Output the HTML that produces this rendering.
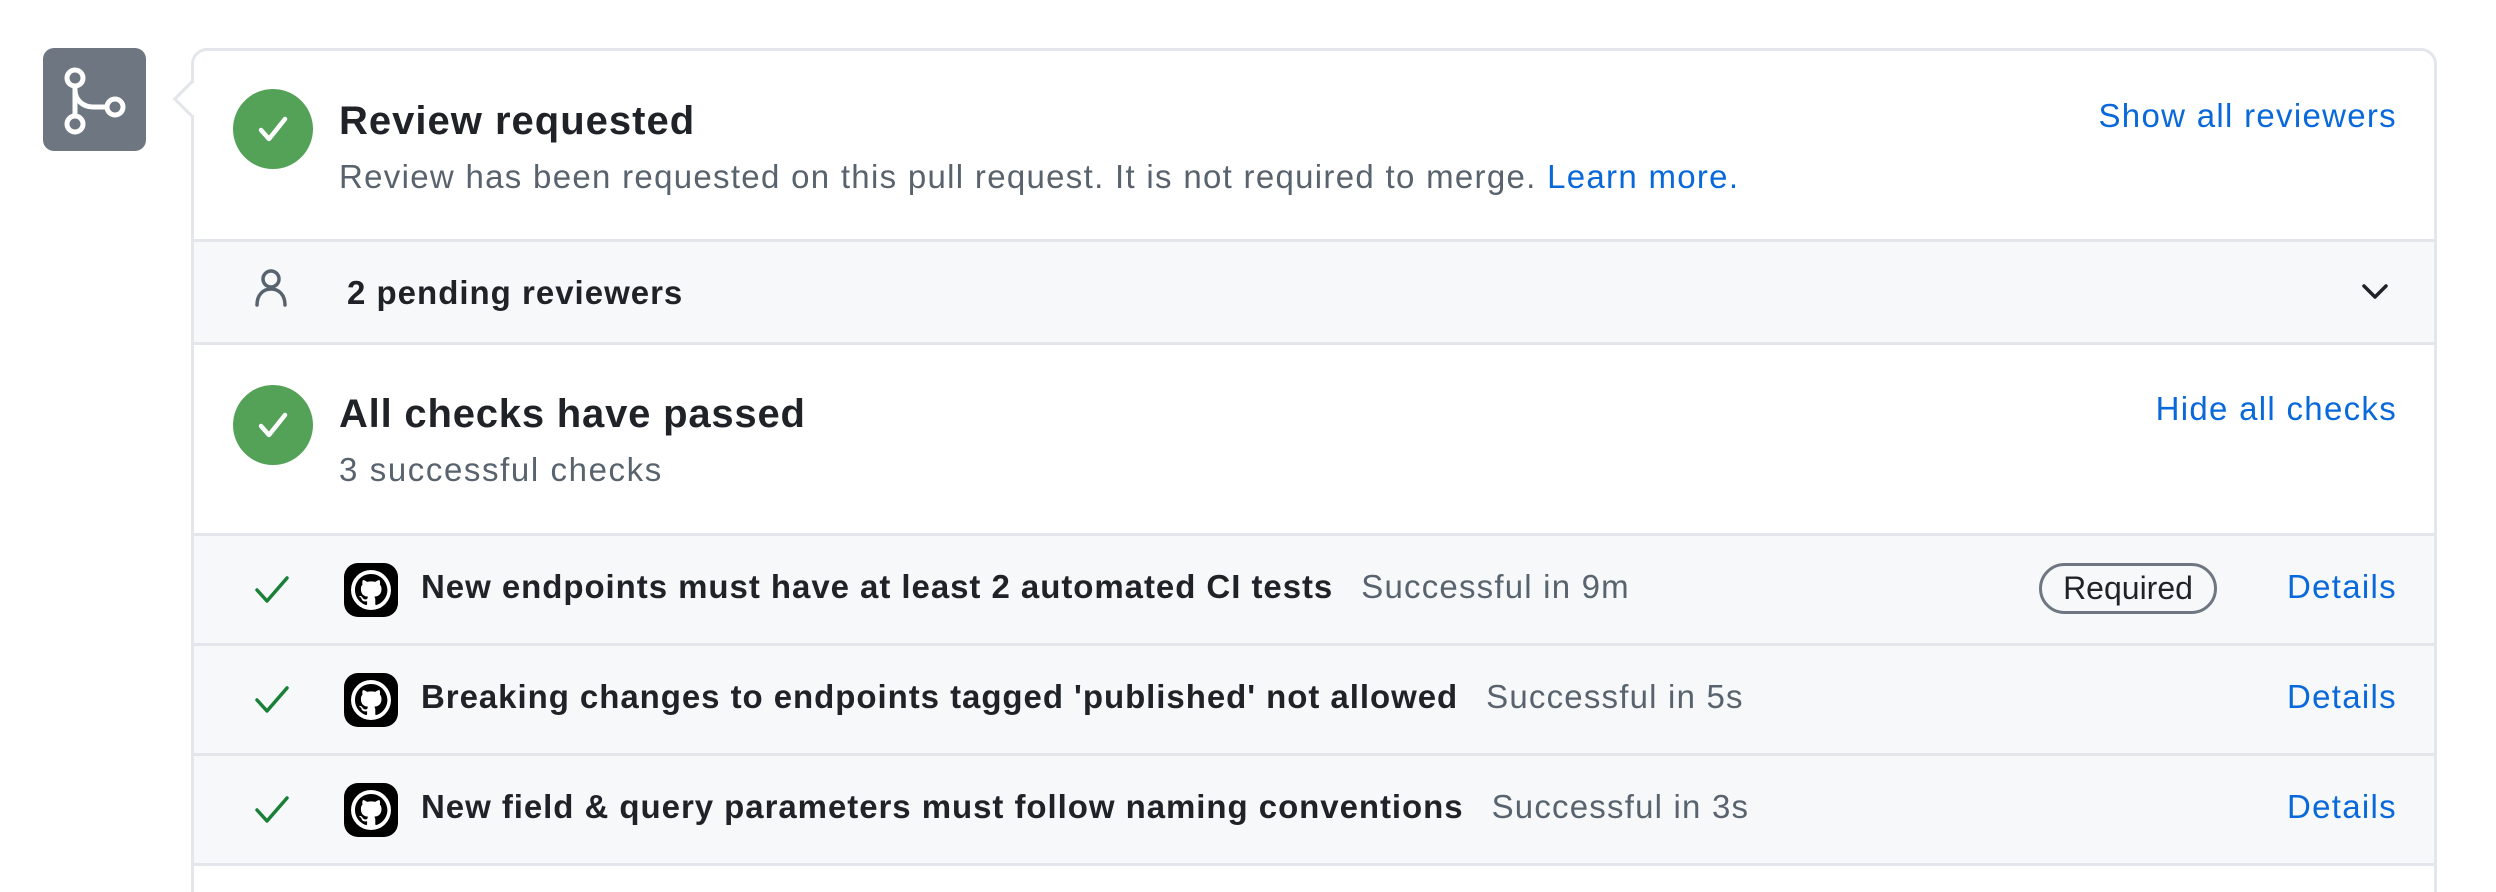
<!DOCTYPE html>
<html><head><meta charset="utf-8"><style>
*{margin:0;padding:0;box-sizing:border-box}
html,body{width:2496px;height:892px;overflow:hidden}
body{background:#fff;font-family:"Liberation Sans",Arial,sans-serif;color:#1f2328;position:relative}
.abs{position:absolute}
.avatar{left:43px;top:48px;width:103px;height:103px;background:#6e7781;border-radius:11px}
.card{left:191px;top:48px;width:2246px;height:844px;border:3px solid #e3e6ea;border-bottom:none;border-radius:16px 16px 0 0;background:#fff;overflow:hidden}
.ptr{left:178px;top:86px;width:26px;height:26px;background:#fff;border-left:3px solid #e3e6ea;border-bottom:3px solid #e3e6ea;transform:rotate(45deg)}
.circ{width:80px;height:80px;border-radius:50%;background:#53a257}
.t{font-weight:bold;font-size:40px;white-space:nowrap}
.s{font-size:33px;color:#59636e;white-space:nowrap;letter-spacing:1.3px}
.link{color:#0969da;font-size:33px;white-space:nowrap;letter-spacing:1.3px}
.hr{left:0;width:2246px;height:3px;background:#e3e6ea}
.gray{left:0;width:2246px;background:#f6f8fa}
.rt{font-weight:bold;font-size:33px;white-space:nowrap;letter-spacing:0.95px}
.rs{font-size:33px;color:#59636e;font-weight:normal;margin-left:28px;letter-spacing:1.2px}
.row{left:0;width:2240px;height:107px}
</style></head><body>
<div class="abs avatar">
<svg width="103" height="103" viewBox="0 0 103 103"><g fill="none" stroke="#fff" stroke-width="5"><circle cx="32" cy="30" r="8"/><circle cx="32" cy="76" r="8"/><circle cx="72" cy="59" r="8"/><path d="M32 38V68M32 42C32 52 40 59 50 59H64"/></g></svg>
</div>
<div class="abs card">
  <div class="abs circ" style="left:39px;top:38px"><svg width="80" height="80"><path d="M28 41L36 50L52 30" fill="none" stroke="#fff" stroke-width="4.5" stroke-linecap="round" stroke-linejoin="round"/></svg></div>
  <div class="abs t" style="left:145px;top:48px;letter-spacing:1px">Review requested</div>
  <div class="abs s" style="left:145px;top:107px">Review has been requested on this pull request. It is not required to merge. <span style="color:#0969da">Learn more.</span></div>
  <div class="abs link" style="right:37px;top:46px">Show all reviewers</div>
  <div class="abs hr" style="top:188px"></div>
  <div class="abs gray" style="top:191px;height:100px"></div>
  <svg class="abs" style="left:59px;top:217px" width="36" height="40" viewBox="0 0 36 40"><g fill="none" stroke="#59636e" stroke-width="3.5" stroke-linecap="round"><circle cx="18" cy="11" r="8"/><path d="M4 37C4 27 10 21 18 21S32 27 32 37"/></g></svg>
  <div class="abs rt" style="left:153px;top:223px;letter-spacing:1px">2 pending reviewers</div>
  <svg class="abs" style="left:2166px;top:231px" width="30" height="20"><path d="M4 4L15 15L26 4" fill="none" stroke="#1f2328" stroke-width="3.5" stroke-linecap="round" stroke-linejoin="round"/></svg>
  <div class="abs hr" style="top:291px"></div>
  <div class="abs circ" style="left:39px;top:334px"><svg width="80" height="80"><path d="M28 41L36 50L52 30" fill="none" stroke="#fff" stroke-width="4.5" stroke-linecap="round" stroke-linejoin="round"/></svg></div>
  <div class="abs t" style="left:145px;top:341px;letter-spacing:0.8px">All checks have passed</div>
  <div class="abs s" style="left:145px;top:400px;letter-spacing:1.6px">3 successful checks</div>
  <div class="abs link" style="right:37px;top:339px">Hide all checks</div>

  <div class="abs hr" style="top:482px"></div>
  <div class="abs gray" style="top:485px;height:107px"></div>
  <div class="abs hr" style="top:592px"></div>
  <div class="abs gray" style="top:595px;height:107px"></div>
  <div class="abs hr" style="top:702px"></div>
  <div class="abs gray" style="top:705px;height:107px"></div>
  <div class="abs hr" style="top:812px"></div>

  <div class="abs row" style="top:485px">
    <svg class="abs" style="left:60px;top:39px" width="36" height="30"><path d="M3 15L13 26L33 3" fill="none" stroke="#1a7f37" stroke-width="3.5" stroke-linecap="round" stroke-linejoin="round"/></svg>
    <svg class="abs" style="left:150px;top:27px" width="54" height="54" viewBox="0 0 54 54"><rect width="54" height="54" rx="14" fill="#000"/><circle cx="27" cy="27" r="20" fill="#fff"/><path d="M27 11C18 11 11 18 11 27c0 7 4.5 13 11 15 .8.1 1.1-.4 1.1-.8v-3c-4.4 1-5.4-2-5.4-2-.7-1.8-1.8-2.3-1.8-2.3-1.5-1 .1-1 .1-1 1.6.1 2.5 1.7 2.5 1.7 1.4 2.5 3.8 1.8 4.7 1.4.1-1 .6-1.8 1-2.2-3.6-.4-7.3-1.8-7.3-8 0-1.8.6-3.2 1.7-4.4-.2-.4-.7-2 .2-4.2 0 0 1.3-.4 4.4 1.7a15 15 0 0 1 8 0c3.1-2.1 4.4-1.7 4.4-1.7.9 2.2.3 3.8.2 4.2 1 1.1 1.7 2.6 1.7 4.4 0 6.2-3.7 7.6-7.3 8 .6.5 1.1 1.5 1.1 3v4.4c0 .4.3.9 1.1.8 6.4-2.1 11-8 11-15C43 18 36 11 27 11z" fill="#000"/></svg>
    <div class="abs rt" style="left:227px;top:32px">New endpoints must have at least 2 automated CI tests<span class="rs">Successful in 9m</span></div>
    <div class="abs" style="left:1845px;top:27px;width:178px;height:51px;border:3px solid #6e7781;border-radius:26px;font-size:32px;text-align:center;line-height:45px">Required</div>
    <div class="abs link" style="right:37px;top:32px">Details</div>
  </div>
  <div class="abs row" style="top:595px">
    <svg class="abs" style="left:60px;top:39px" width="36" height="30"><path d="M3 15L13 26L33 3" fill="none" stroke="#1a7f37" stroke-width="3.5" stroke-linecap="round" stroke-linejoin="round"/></svg>
    <svg class="abs" style="left:150px;top:27px" width="54" height="54" viewBox="0 0 54 54"><rect width="54" height="54" rx="14" fill="#000"/><circle cx="27" cy="27" r="20" fill="#fff"/><path d="M27 11C18 11 11 18 11 27c0 7 4.5 13 11 15 .8.1 1.1-.4 1.1-.8v-3c-4.4 1-5.4-2-5.4-2-.7-1.8-1.8-2.3-1.8-2.3-1.5-1 .1-1 .1-1 1.6.1 2.5 1.7 2.5 1.7 1.4 2.5 3.8 1.8 4.7 1.4.1-1 .6-1.8 1-2.2-3.6-.4-7.3-1.8-7.3-8 0-1.8.6-3.2 1.7-4.4-.2-.4-.7-2 .2-4.2 0 0 1.3-.4 4.4 1.7a15 15 0 0 1 8 0c3.1-2.1 4.4-1.7 4.4-1.7.9 2.2.3 3.8.2 4.2 1 1.1 1.7 2.6 1.7 4.4 0 6.2-3.7 7.6-7.3 8 .6.5 1.1 1.5 1.1 3v4.4c0 .4.3.9 1.1.8 6.4-2.1 11-8 11-15C43 18 36 11 27 11z" fill="#000"/></svg>
    <div class="abs rt" style="left:227px;top:32px">Breaking changes to endpoints tagged 'published' not allowed<span class="rs">Successful in 5s</span></div>
    <div class="abs link" style="right:37px;top:32px">Details</div>
  </div>
  <div class="abs row" style="top:705px">
    <svg class="abs" style="left:60px;top:39px" width="36" height="30"><path d="M3 15L13 26L33 3" fill="none" stroke="#1a7f37" stroke-width="3.5" stroke-linecap="round" stroke-linejoin="round"/></svg>
    <svg class="abs" style="left:150px;top:27px" width="54" height="54" viewBox="0 0 54 54"><rect width="54" height="54" rx="14" fill="#000"/><circle cx="27" cy="27" r="20" fill="#fff"/><path d="M27 11C18 11 11 18 11 27c0 7 4.5 13 11 15 .8.1 1.1-.4 1.1-.8v-3c-4.4 1-5.4-2-5.4-2-.7-1.8-1.8-2.3-1.8-2.3-1.5-1 .1-1 .1-1 1.6.1 2.5 1.7 2.5 1.7 1.4 2.5 3.8 1.8 4.7 1.4.1-1 .6-1.8 1-2.2-3.6-.4-7.3-1.8-7.3-8 0-1.8.6-3.2 1.7-4.4-.2-.4-.7-2 .2-4.2 0 0 1.3-.4 4.4 1.7a15 15 0 0 1 8 0c3.1-2.1 4.4-1.7 4.4-1.7.9 2.2.3 3.8.2 4.2 1 1.1 1.7 2.6 1.7 4.4 0 6.2-3.7 7.6-7.3 8 .6.5 1.1 1.5 1.1 3v4.4c0 .4.3.9 1.1.8 6.4-2.1 11-8 11-15C43 18 36 11 27 11z" fill="#000"/></svg>
    <div class="abs rt" style="left:227px;top:32px">New field &amp; query parameters must follow naming conventions<span class="rs">Successful in 3s</span></div>
    <div class="abs link" style="right:37px;top:32px">Details</div>
  </div>
</div>
<div class="abs ptr"></div>
</body></html>
